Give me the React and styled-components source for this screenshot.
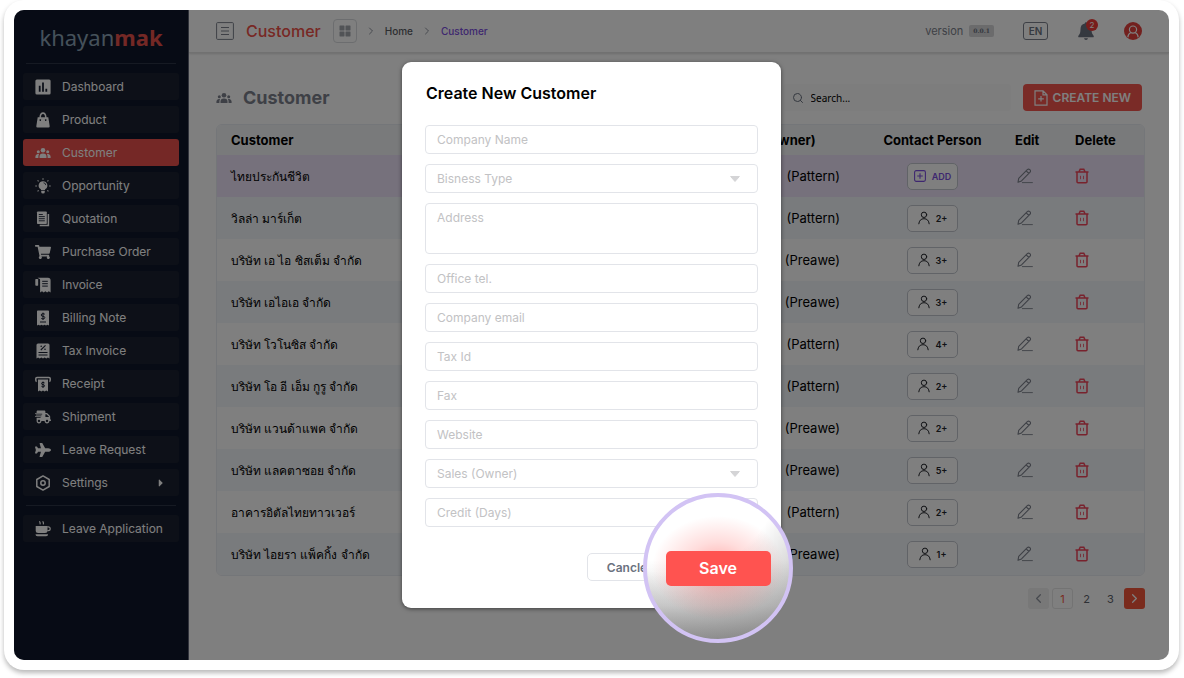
import React from 'react';
import styled, { createGlobalStyle, css } from 'styled-components';
import { FaShoppingCart, FaShippingFast, FaPlane, FaCaretRight } from 'react-icons/fa';
import { FiChevronLeft, FiChevronRight, FiSearch } from 'react-icons/fi';

const GlobalStyle = createGlobalStyle`
  * {
    box-sizing: border-box;
  }

  body {
    margin: 0;
    background: #ffffff;
    font-family: Inter, 'Noto Sans', sans-serif;
    font-size: 13px;
    color: #000000;
  }

  button, input, select, textarea {
    font-family: inherit;
  }
`;

/* ---------- icons ---------- */

const DashboardIcon = () => (
  <svg viewBox="0 0 16 16" width="16" height="16">
    <rect x=".4" y=".4" width="15.200" height="15.200" rx="1.500" fill="currentColor" />
    <path d="M4.700 6.800v6M8 3.500v9.300M11.300 9.800v3" stroke="#1b2335" strokeWidth="1.800" />
  </svg>
);

const BagIcon = () => (
  <svg viewBox="0 0 16 16" width="16" height="16" fill="currentColor">
    <path fillRule="evenodd" d="M4.400 5.200C4.600 2 6 .3 8 .3s3.400 1.700 3.600 4.900h1.700L14.700 14.200q.1 1.300-1.200 1.300h-11q-1.300 0-1.200-1.300L2.700 5.200zM6 5.200h4C9.900 3 9.200 1.900 8 1.900S6.100 3 6 5.200zM5.300 7.200a.8.8 0 1 0 .01 0zM10.700 7.200a.8.8 0 1 0 .01 0z" />
  </svg>
);

const GroupIcon = () => (
  <svg viewBox="0 0 16 16" width="16" height="16" fill="currentColor">
    <circle cx="8" cy="5.200" r="2.300" />
    <circle cx="3.300" cy="6.700" r="1.500" />
    <circle cx="12.700" cy="6.700" r="1.500" />
    <path d="M4.500 13v-1.400Q4.500 8.400 8 8.400t3.500 3.200V13zM.4 13v-1.200q0-2.600 2.700-2.900 .6 0 1 .2-.7 1-.7 2.700V13zM15.600 13v-1.200q0-2.600-2.700-2.900-.6 0-1 .2 .7 1 .7 2.700V13z" />
  </svg>
);

const BulbIcon = () => (
  <svg viewBox="0 0 16 16" width="16" height="16" fill="currentColor">
    <path d="M8 3.200a4.300 4.300 0 0 0-2.400 7.900q.5.400.5 1h3.800q0-.6.500-1A4.300 4.300 0 0 0 8 3.200zM6.200 12.800h3.600v1.200q0 1.500-1.800 1.500t-1.800-1.500z" />
    <path d="M8 .3v1.500M2.600 2.400l1 1M13.400 2.400l-1 1M.3 8h1.600M14.100 8h1.600M2.600 13.400l1-1M13.400 13.400l-1-1" stroke="currentColor" strokeWidth="1.100" />
    <path d="M8.500 4.800a2.300 2.300 0 0 1 2.200 2.300" fill="none" stroke="#1b2335" strokeWidth=".8" />
  </svg>
);

const PagesIcon = () => (
  <svg viewBox="0 0 16 16" width="16" height="16">
    <path d="M13.400 3v11.600H4.700" fill="none" stroke="currentColor" strokeWidth="1.500" />
    <rect x="2" y=".5" width="9.800" height="12.600" rx=".8" fill="currentColor" />
    <path d="M3.800 3.500h4M3.800 5.600h6M3.800 7.700h6M3.800 9.800h6" stroke="#1b2335" strokeWidth=".9" />
  </svg>
);

const InvoiceIcon = () => (
  <svg viewBox="0 0 16 16" width="16" height="16">
    <path d="M2.600 .8H13q2.600 0 2.600 2.600V15.500l-1.800-1.200-1.700 1.200-1.700-1.200-1.700 1.200-1.700-1.200-1.900 1.200V3q0-1.200-1-1.200z" fill="currentColor" />
    <rect x=".3" y="2" width="3" height="6.800" rx=".8" fill="currentColor" />
    <path d="M7.200 4.300h5.600M7.200 6.700h5.600M7.200 9.100h5.600" stroke="#1b2335" strokeWidth="1" />
    <path d="M3.800 2.400v7" stroke="#1b2335" strokeWidth=".7" />
  </svg>
);

const BillIcon = () => (
  <svg viewBox="0 0 16 16" width="16" height="16">
    <path d="M2 1.300q0-.8.8-.8h10.400q.8 0 .8.800V15.500l-1.500-.8-1.500.8-1.500-.8-1.500.8-1.500-.8-1.500.8-1.500-.8-1.500.8z" fill="currentColor" />
    <path d="M9.900 4.400Q9.500 3.700 8 3.700q-1.800 0-1.800 1.300T8 6.300t1.800 1.300T8 8.900q-1.500 0-1.900-.8M8 2.600v7.400M5 12h6" fill="none" stroke="#1b2335" strokeWidth="1" />
  </svg>
);

const TaxIcon = () => (
  <svg viewBox="0 0 16 16" width="16" height="16">
    <path d="M1.500 2q0-1.500 1.500-1.500h10q1.500 0 1.500 1.500v13.500l-1.600-.9-1.600.9-1.700-.9-1.600.9-1.600-.9-1.700.9-1.600-.9-1.600.9z" fill="currentColor" />
    <path d="M10.500 2.400L5.800 7M3.500 9.500h9M3.500 12h9" stroke="#1b2335" strokeWidth="1.100" />
    <circle cx="6.200" cy="3.200" r=".8" fill="#1b2335" />
    <circle cx="10" cy="6.300" r=".8" fill="#1b2335" />
  </svg>
);

const ReceiptIcon = () => (
  <svg viewBox="0 0 16 16" width="16" height="16">
    <path d="M1.700 5.500Q.8 5.300.8 4V2.600q0-1.200 1.200-1.200h12q1.200 0 1.200 1.200V4q0 1.300-.9 1.500" fill="none" stroke="currentColor" strokeWidth="1.500" />
    <path d="M3 3.500h10v12l-1.700-.9-1.700.9-1.600-.9-1.600.9-1.700-.9-1.700.9z" fill="currentColor" />
    <path d="M9.600 7Q9.200 6.400 8 6.400q-1.500 0-1.500 1.100T8 8.600t1.500 1.200T8 10.900q-1.200 0-1.600-.7M8 5.500v6.300" fill="none" stroke="#1b2335" strokeWidth="1" />
  </svg>
);

const SettingsIcon = () => (
  <svg viewBox="0 0 16 16" width="16" height="16" fill="none" stroke="currentColor" strokeWidth="1.500" strokeLinejoin="round">
    <path d="M8 .9l6.200 3.600v7L8 15.100l-6.200-3.600v-7z" />
    <circle cx="8" cy="8" r="2.200" />
  </svg>
);

const CoffeeIcon = () => (
  <svg viewBox="0 0 16 16" width="16" height="16">
    <path d="M.7 5h11.800v4.500q0 2.500-2.500 2.500H3.200Q.7 12 .7 9.500zM.5 13.200h12.600q0 2-2 2H2.500q-2 0-2-2z" fill="currentColor" />
    <path d="M12.300 5.800h.9q2 0 2 1.900t-2 1.900h-.9M4.300.4q1.200 1 .7 3M7.600.4q1.200 1 .7 3" fill="none" stroke="currentColor" strokeWidth="1.200" />
  </svg>
);

const MenuIcon = () => (
  <svg viewBox="0 0 18 18" width="18" height="18" fill="none" stroke="currentColor">
    <rect x=".6" y=".6" width="16.800" height="16.800" rx="1" strokeWidth="1" />
    <path d="M5 5.500h8M5 9h8M5 12.500h8" strokeWidth="1" />
  </svg>
);

const GridIcon = () => (
  <svg viewBox="0 0 12 12" width="12" height="12" fill="currentColor">
    <rect x=".5" y=".5" width="5" height="5" rx=".4" />
    <rect x="6.500" y=".5" width="5" height="5" rx=".4" />
    <rect x=".5" y="6.500" width="5" height="5" rx=".4" />
    <rect x="6.500" y="6.500" width="5" height="5" rx=".4" />
  </svg>
);

const BellIcon = () => (
  <svg viewBox="0 0 18 20" width="18" height="20" fill="currentColor">
    <path d="M9 1.200q1.200 0 1.200 1.200Q14.500 3.300 14.500 8q0 4.500 1.600 6 .9.900.7 1.800-.1.500-1 .5H2.200q-.9 0-1-.5-.2-.9.700-1.800 1.600-1.500 1.600-6 0-4.700 4.300-5.600Q7.800 1.200 9 1.200zM7 17.200h4q-.3 1.800-2 1.800t-2-1.800z" />
  </svg>
);

const AvatarIcon = () => (
  <svg viewBox="0 0 18 18" width="18" height="18">
    <circle cx="9" cy="9" r="9" fill="#e5403c" />
    <circle cx="9" cy="7.600" r="3.600" fill="none" stroke="#ffffff" strokeWidth="1.200" />
    <path d="M3.800 15.400q.3-3.600 3-4.900M14.200 15.400q-.3-3.600-3-4.900" fill="none" stroke="#ffffff" strokeWidth="1.200" />
  </svg>
);

const FilePlusIcon = () => (
  <svg viewBox="0 0 14 16" width="14" height="16" fill="none" stroke="currentColor" strokeWidth="1.200">
    <path d="M1 .8h8l4 4v10.400H1zM9 .8v4h4M7 6v5.600M4.200 8.800h5.600" />
  </svg>
);

const PlusBoxIcon = () => (
  <svg viewBox="0 0 12 12" width="12" height="12" fill="none" stroke="currentColor" strokeWidth="1.100">
    <rect x=".6" y=".6" width="10.800" height="10.800" rx="1.600" />
    <path d="M6 3.200v5.600M3.200 6h5.600" />
  </svg>
);

const PersonIcon = () => (
  <svg viewBox="0 0 12 14" width="12" height="14" fill="none" stroke="currentColor" strokeWidth="1" strokeLinecap="round">
    <circle cx="6" cy="3.800" r="2.700" />
    <path d="M.8 12.800Q1.400 7.700 6 7.700t5.200 5.100" />
  </svg>
);

const PencilIcon = () => (
  <svg viewBox="0 0 16 16" width="16" height="16" fill="none" stroke="currentColor" strokeWidth="1.100" strokeLinejoin="round">
    <path d="M1 14.300l.7-3.900L10.300 1.700q1.200-1.100 2.500 0t.3 2.500L4.500 12.900zM9.200 2.900l2.700 2.600" />
    <path d="M5 14.600h10.800" strokeWidth=".9" />
  </svg>
);

const TrashIcon = () => (
  <svg viewBox="0 0 14 16" width="14" height="16" fill="none" stroke="currentColor" strokeWidth="1.500">
    <path d="M.5 3.900h13M4 3.700l1.200-2.500h3.600L10 3.700M2 3.900v9.900q0 1 1 1h8q1 0 1-1V3.900" />
    <path d="M5.500 7.800v3.400M8.500 7.800v3.400" strokeWidth=".8" />
  </svg>
);

/* ---------- frame ---------- */

const Frame = styled.div`
  display: flex;
  min-height: calc(100vh - 8px);
  margin: 0 5px 8px 4px;
  padding: 10px;
  border-radius: 20px;
  background: #ffffff;
  box-shadow: 0 3px 5px rgba(0, 0, 0, 0.28);
`;

const Screen = styled.div`
  position: relative;
  display: flex;
  flex: 1;
  border-radius: 10px;
  overflow: hidden;
  background: #ffffff;
`;

/* ---------- sidebar ---------- */

const Sidebar = styled.aside`
  width: 175px;
  padding: 16px 9px;
  background: #0f172a;
  border-right: 1px solid #64697a;
`;

const Logo = styled.div`
  height: 37px;
  font-family: 'Noto Sans', sans-serif;
  font-size: 22px;
  line-height: 22px;
  text-align: center;
  color: #8ba3b5;

  strong {
    color: #e8504b;
  }
`;

const Divider = styled.hr`
  height: 1px;
  margin: 0 3px;
  border: 0;
  background: #2c3446;
`;

const Nav = styled.nav`
  display: flex;
  flex-direction: column;
  gap: 6px;
  padding: 9px 0;
`;

const NavItem = styled.a`
  display: flex;
  align-items: center;
  gap: 11px;
  height: 27px;
  padding: 0 12px;
  border-radius: 3px;
  font-size: 12px;
  white-space: nowrap;
  color: #ffffff;
  text-decoration: none;
  background: ${({ $active }) => ($active ? '#ea514c' : '#1b2130')};

  svg {
    flex: none;
  }

  svg:nth-of-type(2) {
    margin-left: auto;
  }
`;

/* ---------- top bar ---------- */

const Main = styled.main`
  flex: 1;
  min-width: 0;
`;

const TopBar = styled.header`
  display: flex;
  align-items: center;
  justify-content: space-between;
  height: 43px;
  padding: 0 27px;
  border-bottom: 1px solid #e2e2e2;
  box-shadow: 0 1px 2px rgba(0, 0, 0, 0.15);
`;

const BarGroup = styled.div`
  display: flex;
  align-items: center;
  gap: ${({ $gap }) => $gap}px;
  color: #8f949f;
`;

const IconButton = styled.button`
  position: relative;
  display: flex;
  padding: 0;
  border: 0;
  background: none;
  color: ${({ $color }) => $color || '#7c818c'};
`;

const GridButton = styled(IconButton)`
  align-items: center;
  justify-content: center;
  width: 24px;
  height: 24px;
  border: 1px solid #d8dade;
  border-radius: 4px;
`;

const BarTitle = styled.span`
  font-size: 16px;
  font-weight: 500;
  color: #f05148;
`;

const Crumb = styled.a`
  font-size: 10px;
  font-weight: 500;
  text-decoration: none;
  color: ${({ $current }) => ($current ? '#7c4fe0' : '#5a5c62')};
`;

const Version = styled.span`
  display: flex;
  align-items: center;
  gap: 6px;
  font-size: 11px;
  color: #7c818c;
`;

const VersionTag = styled.span`
  padding: 0 4px;
  border-radius: 2px;
  background: #d6d6d8;
  font-family: 'DejaVu Serif', serif;
  font-size: 6px;
  font-weight: 700;
  line-height: 12px;
  color: #6b7280;
`;

const Language = styled.button`
  width: 25px;
  height: 18px;
  padding: 0;
  border: 1px solid #7c818c;
  border-radius: 3px;
  background: none;
  font-size: 10px;
  font-weight: 600;
  color: #6b7280;
`;

const Badge = styled.span`
  position: absolute;
  top: -2px;
  right: -3px;
  width: 12px;
  height: 12px;
  border-radius: 50%;
  background: #f03a36;
  font-size: 8px;
  line-height: 12px;
  text-align: center;
  color: #ffffff;
`;

/* ---------- page content ---------- */

const Content = styled.section`
  padding: 31px 24px 0 27px;
`;

const PageHead = styled.div`
  display: flex;
  align-items: center;
  justify-content: space-between;
  padding-right: 3px;
`;

const PageTitle = styled.h1`
  display: flex;
  align-items: center;
  gap: 11px;
  margin: 0;
  font-size: 18px;
  font-weight: 700;
  line-height: 27px;
  color: #7c818c;
`;

const Actions = styled.div`
  display: flex;
  gap: 12px;
`;

const SearchBox = styled.label`
  display: flex;
  align-items: center;
  gap: 7px;
  width: 228px;
  height: 27px;
  padding: 0 9px;
  border-radius: 3px;
  background: #fafafa;
  color: #6b7280;

  input {
    flex: 1;
    min-width: 0;
    padding: 0;
    border: 0;
    outline: 0;
    background: none;
    font-family: 'Noto Sans', sans-serif;
    font-size: 10px;
  }

  input::placeholder {
    color: #000000;
  }
`;

const CreateButton = styled.button`
  display: flex;
  align-items: center;
  gap: 5px;
  height: 27px;
  padding: 0 11px;
  border: 0;
  border-radius: 4px;
  background: #f4574f;
  font-size: 12px;
  font-weight: 600;
  color: #ffffff;
`;

const TableCard = styled.div`
  margin-top: 13px;
  border: 1px solid #e8ecf2;
  border-radius: 6px;
  overflow: hidden;
`;

const Table = styled.table`
  width: 100%;
  table-layout: fixed;
  border-collapse: collapse;

  th, td {
    padding: 0;
    text-align: left;
  }

  th {
    height: 30px;
    background: #f3f5f7;
    font-weight: 700;
    white-space: nowrap;
  }

  th:first-child, td:first-child {
    padding-left: 14px;
  }

  td {
    height: 42px;
  }

  td:first-child {
    font-size: 12px;
    font-weight: 500;
  }

  th:nth-child(2) {
    padding-left: 8px;
  }

  td:nth-child(2) {
    padding-right: 10px;
    text-align: right;
  }

  th:nth-child(3), td:nth-child(3) {
    text-align: center;
  }

  td:nth-child(4) {
    padding-left: 2px;
  }
`;

const Row = styled.tr`
  background: ${({ $tone }) => $tone};
`;

const ContactButton = styled.button`
  display: inline-flex;
  align-items: center;
  justify-content: center;
  gap: 6px;
  width: 51px;
  height: 27px;
  padding: 0;
  border: 1px solid #c3c7ce;
  border-radius: 5px;
  background: #ffffff;
  font-size: 9px;
  font-weight: 600;
  vertical-align: middle;
  color: ${({ $add }) => ($add ? '#7c4fe0' : '#22242a')};
`;

const Pagination = styled.nav`
  display: flex;
  justify-content: flex-end;
  gap: 3px;
  margin-top: 12px;
`;

const PageButton = styled.button`
  display: flex;
  align-items: center;
  justify-content: center;
  width: 21px;
  height: 21px;
  padding: 0;
  border: 1px solid transparent;
  border-radius: 3px;
  background: none;
  font-size: 11px;
  color: #5c616b;

  ${({ $kind }) => $kind === 'prev' && css`
    background: #f0f0f0;
    color: #8f949f;
  `}

  ${({ $kind }) => $kind === 'current' && css`
    border-color: #e6e6e6;
    color: #f4573f;
  `}

  ${({ $kind }) => $kind === 'next' && css`
    background: #f4573a;
    color: #ffffff;
  `}
`;

/* ---------- modal ---------- */

const Overlay = styled.div`
  position: absolute;
  inset: 0;
  display: flex;
  align-items: center;
  justify-content: center;
  background: rgba(0, 0, 0, 0.5);
`;

const Modal = styled.form`
  position: relative;
  width: 100%;
  max-width: 379px;
  padding: 20px 23px 27px;
  border-radius: 9px;
  background: #ffffff;
  box-shadow: 0 1px 4px rgba(0, 0, 0, 0.5);
`;

const ModalTitle = styled.h2`
  margin: 0 0 21px 1px;
  font-size: 16px;
  font-weight: 600;
  line-height: 22px;
`;

const Fields = styled.div`
  display: flex;
  flex-direction: column;
  gap: 10px;
`;

const fieldStyle = css`
  display: block;
  width: 100%;
  height: 29px;
  padding: 0 11px;
  border: 1px solid #e2e4e9;
  border-radius: 4px;
  background: #ffffff;
  font-size: 12px;
  color: #c2c2c4;

  &::placeholder {
    color: #c2c2c4;
  }
`;

const TextField = styled.input`
  ${fieldStyle}
`;

const AreaField = styled.textarea`
  ${fieldStyle}
  height: 51px;
  padding-top: 6px;
  resize: none;
`;

const SelectWrap = styled.div`
  position: relative;

  svg {
    position: absolute;
    top: 12px;
    right: 18px;
  }
`;

const SelectField = styled.select`
  ${fieldStyle}
  appearance: none;
`;

const ModalFooter = styled.div`
  display: flex;
  justify-content: flex-end;
  margin-top: 26px;
  padding-right: 91px;
`;

const CancelButton = styled.button`
  width: 80px;
  height: 28px;
  border: 1px solid #e2e4e9;
  border-radius: 5px;
  background: #ffffff;
  font-size: 12px;
  font-weight: 600;
  color: #6b7280;
`;

/* lens over the corner of the dialog: red glow, shaded towards the bottom right */
const Spotlight = styled.div`
  position: absolute;
  right: -12px;
  bottom: -35px;
  display: flex;
  align-items: center;
  justify-content: center;
  width: 150px;
  height: 150px;
  border: 4px solid #d2c3f4;
  border-radius: 50%;
  background-color: #ffffff;
  background-image:
    radial-gradient(ellipse 66px 52px at center, rgba(255, 83, 80, 0.5), rgba(255, 83, 80, 0.2) 50%, rgba(255, 83, 80, 0)),
    radial-gradient(circle 190px at 20% -20%, rgba(100, 100, 100, 0) 58%, rgba(100, 100, 100, 0.45) 100%),
    linear-gradient(to bottom, rgba(100, 100, 100, 0) 45%, rgba(100, 100, 100, 0.22) 75%, rgba(100, 100, 100, 0.6) 100%);
  background-origin: border-box;
`;

const SaveButton = styled.button`
  width: 105px;
  height: 35px;
  border: 0;
  border-radius: 5px;
  background: #ff5350;
  font-size: 16px;
  font-weight: 600;
  color: #ffffff;
`;

const menu = [
  { label: 'Dashboard', icon: <DashboardIcon /> },
  { label: 'Product', icon: <BagIcon /> },
  { label: 'Customer', icon: <GroupIcon />, active: true },
  { label: 'Opportunity', icon: <BulbIcon /> },
  { label: 'Quotation', icon: <PagesIcon /> },
  { label: 'Purchase Order', icon: <FaShoppingCart size={16} /> },
  { label: 'Invoice', icon: <InvoiceIcon /> },
  { label: 'Billing Note', icon: <BillIcon /> },
  { label: 'Tax Invoice', icon: <TaxIcon /> },
  { label: 'Receipt', icon: <ReceiptIcon /> },
  { label: 'Shipment', icon: <FaShippingFast size={16} /> },
  { label: 'Leave Request', icon: <FaPlane size={16} /> },
  { label: 'Settings', icon: <SettingsIcon />, more: true },
];

const customers = [
  { name: 'ไทยประกันชีวิต', owner: '(Pattern)', contacts: 0 },
  { name: 'วิลล่า มาร์เก็ต', owner: '(Pattern)', contacts: 2 },
  { name: 'บริษัท เอ ไอ ซิสเต็ม จำกัด', owner: '(Preawe)', contacts: 3 },
  { name: 'บริษัท เอไอเอ จำกัด', owner: '(Preawe)', contacts: 3 },
  { name: 'บริษัท โวโนซิส จำกัด', owner: '(Pattern)', contacts: 4 },
  { name: 'บริษัท โอ อี เอ็ม กูรู จำกัด', owner: '(Pattern)', contacts: 2 },
  { name: 'บริษัท แวนด้าแพค จำกัด', owner: '(Preawe)', contacts: 2 },
  { name: 'บริษัท แลคตาซอย จำกัด', owner: '(Preawe)', contacts: 5 },
  { name: 'อาคารอิตัลไทยทาวเวอร์', owner: '(Pattern)', contacts: 2 },
  { name: 'บริษัท ไอยรา แพ็คกิ้ง จำกัด', owner: '(Preawe)', contacts: 1 },
];

const fields = [
  { label: 'Company Name' },
  { label: 'Bisness Type', type: 'select' },
  { label: 'Address', type: 'area' },
  { label: 'Office tel.' },
  { label: 'Company email' },
  { label: 'Tax Id' },
  { label: 'Fax' },
  { label: 'Website' },
  { label: 'Sales (Owner)', type: 'select' },
  { label: 'Credit (Days)' },
];

const rowTone = (index) => {
  if (index === 0) return '#ece3f8';
  return index % 2 ? '#f3f6fa' : '#ffffff';
};

const Field = ({ label, type }) => {
  if (type === 'area') {
    return <AreaField aria-label={label} placeholder={label} />;
  }
  if (type === 'select') {
    return (
      <SelectWrap>
        <SelectField aria-label={label}>
          <option>{label}</option>
        </SelectField>
        <svg viewBox="0 0 10 6" width="10" height="6">
          <path d="M.6.500h8.800L5 5.500z" fill="#d4d4d6" stroke="#d4d4d6" strokeLinejoin="round" />
        </svg>
      </SelectWrap>
    );
  }
  return <TextField aria-label={label} placeholder={label} />;
};

const App = () => {
  return (
    <>
      <GlobalStyle />
      <Frame>
        <Screen>
          <Sidebar>
            <Logo>khayan<strong>mak</strong></Logo>
            <Divider />
            <Nav>
              {menu.map((item) => (
                <NavItem key={item.label} href="#" $active={item.active}>
                  {item.icon}
                  {item.label}
                  {item.more && <FaCaretRight size={12} />}
                </NavItem>
              ))}
            </Nav>
            <Divider />
            <Nav>
              <NavItem href="#">
                <CoffeeIcon />
                Leave Application
              </NavItem>
            </Nav>
          </Sidebar>

          <Main>
            <TopBar>
              <BarGroup $gap={12}>
                <IconButton aria-label="Menu"><MenuIcon /></IconButton>
                <BarTitle>Customer</BarTitle>
                <BarGroup $gap={8}>
                  <GridButton aria-label="Apps" $color="#a3a6ad"><GridIcon /></GridButton>
                  <FiChevronRight size={12} />
                  <Crumb href="#">Home</Crumb>
                  <FiChevronRight size={12} />
                  <Crumb href="#" $current>Customer</Crumb>
                </BarGroup>
              </BarGroup>
              <BarGroup $gap={29}>
                <Version>version <VersionTag>0.0.1</VersionTag></Version>
                <Language>EN</Language>
                <IconButton aria-label="Notifications" $color="#6b7280">
                  <BellIcon />
                  <Badge>2</Badge>
                </IconButton>
                <IconButton aria-label="Account"><AvatarIcon /></IconButton>
              </BarGroup>
            </TopBar>

            <Content>
              <PageHead>
                <PageTitle><GroupIcon />Customer</PageTitle>
                <Actions>
                  <SearchBox>
                    <FiSearch size={12} />
                    <input type="text" aria-label="Search" placeholder="Search..." />
                  </SearchBox>
                  <CreateButton><FilePlusIcon />CREATE NEW</CreateButton>
                </Actions>
              </PageHead>

              <TableCard>
                <Table>
                  <colgroup>
                    <col />
                    <col width="132" />
                    <col width="165" />
                    <col width="60" />
                    <col width="69" />
                  </colgroup>
                  <thead>
                    <tr>
                      <th>Customer</th>
                      <th>Sales (Owner)</th>
                      <th>Contact Person</th>
                      <th>Edit</th>
                      <th>Delete</th>
                    </tr>
                  </thead>
                  <tbody>
                    {customers.map((customer, index) => (
                      <Row key={customer.name} $tone={rowTone(index)}>
                        <td>{customer.name}</td>
                        <td>{customer.owner}</td>
                        <td>
                          {customer.contacts ? (
                            <ContactButton><PersonIcon />{customer.contacts}+</ContactButton>
                          ) : (
                            <ContactButton $add><PlusBoxIcon />ADD</ContactButton>
                          )}
                        </td>
                        <td><IconButton aria-label="Edit"><PencilIcon /></IconButton></td>
                        <td><IconButton aria-label="Delete" $color="#f0445a"><TrashIcon /></IconButton></td>
                      </Row>
                    ))}
                  </tbody>
                </Table>
              </TableCard>

              <Pagination>
                <PageButton $kind="prev" aria-label="Previous page"><FiChevronLeft size={15} /></PageButton>
                <PageButton $kind="current">1</PageButton>
                <PageButton>2</PageButton>
                <PageButton>3</PageButton>
                <PageButton $kind="next" aria-label="Next page"><FiChevronRight size={15} /></PageButton>
              </Pagination>
            </Content>
          </Main>

          <Overlay>
            <Modal>
              <ModalTitle>Create New Customer</ModalTitle>
              <Fields>
                {fields.map((field) => (
                  <Field key={field.label} {...field} />
                ))}
              </Fields>
              <ModalFooter>
                <CancelButton type="button">Cancle</CancelButton>
              </ModalFooter>
              <Spotlight>
                <SaveButton type="button">Save</SaveButton>
              </Spotlight>
            </Modal>
          </Overlay>
        </Screen>
      </Frame>
    </>
  );
};

export default App;
